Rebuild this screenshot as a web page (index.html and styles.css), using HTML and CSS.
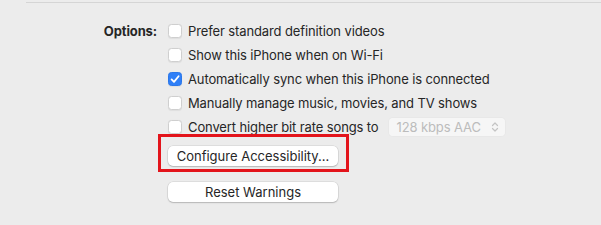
FILE: index.html
```html
<!DOCTYPE html>
<html>
<head>
<meta charset="utf-8">
<link rel="stylesheet" href="styles.css">
</head>
<body>
<div class="topline"></div>
<div class="options">
  <div class="label">Options:</div>
  <div class="controls">
    <div class="row"><span class="cb"></span><span>Prefer standard definition videos</span></div>
    <div class="row"><span class="cb"></span><span>Show this iPhone when on Wi-Fi</span></div>
    <div class="row"><span class="cb checked"><svg viewBox="0 0 14 14" width="14" height="14"><path d="M3.6 7.4 L6 9.9 L10.6 4.2" fill="none" stroke="#fff" stroke-width="1.8" stroke-linecap="round" stroke-linejoin="round"/></svg></span><span>Automatically sync when this iPhone is connected</span></div>
    <div class="row"><span class="cb"></span><span>Manually manage music, movies, and TV shows</span></div>
    <div class="row"><span class="cb"></span><span>Convert higher bit rate songs to</span>
      <span class="popup"><span>128 kbps AAC</span><svg viewBox="0 0 8 12" width="8" height="12"><path d="M1.5 4.5 L4 2 L6.5 4.5 M1.5 7.5 L4 10 L6.5 7.5" fill="none" stroke="#c4c4c4" stroke-width="1.2" stroke-linecap="round" stroke-linejoin="round"/></svg></span>
    </div>
    <div class="btnwrap highlight"><button class="btn">Configure Accessibility...</button></div>
    <div class="btnwrap second"><button class="btn">Reset Warnings</button></div>
  </div>
</div>
</body>
</html>
```
FILE: styles.css
```css
html, body {
  margin: 0;
  padding: 0;
  background: #ececec;
  width: 601px;
  height: 225px;
  overflow: hidden;
  font-family: "Inter", "Liberation Sans", sans-serif;
  font-size: 13px;
  letter-spacing: -0.12px;
  color: #262626;
}
.topline {
  margin: 2px 0 0 26px;
  height: 1px;
  background: #d5d5d5;
}
.options {
  display: grid;
  grid-template-columns: 157px auto;
  column-gap: 11px;
  padding-top: 16px;
}
.label {
  text-align: right;
  font-weight: 700;
  line-height: 24px;
}
.controls {
  display: flex;
  flex-direction: column;
}
.row {
  height: 24px;
  display: flex;
  align-items: center;
  gap: 6px;
  white-space: nowrap;
}
.cb {
  width: 14px;
  height: 14px;
  box-sizing: border-box;
  border-radius: 3.5px;
  background: #fff;
  border: 1px solid #cfcfcf;
  box-shadow: 0 0.5px 1px rgba(0,0,0,0.06);
  flex: none;
  display: flex;
}
.cb.checked {
  background: #2f7ff7;
  border-color: #2a77ea;
}
.cb.checked svg { margin: -1px; }
.popup {
  margin-left: 3px;
  width: 118px;
  height: 20px;
  box-sizing: border-box;
  border-radius: 5px;
  background: rgba(255,255,255,0.55);
  border: 0.5px solid rgba(0,0,0,0.06);
  display: flex;
  align-items: center;
  justify-content: space-between;
  padding: 0 6px 0 8px;
  color: #bcbcbc;
}
.btnwrap {
  position: relative;
  width: 170px;
}
.btnwrap.highlight { margin-top: 7px; }
.btnwrap.second { margin-top: 16px; }
.highlight::after {
  content: "";
  position: absolute;
  left: -10px;
  top: -12px;
  right: -11px;
  bottom: -6px;
  border: 3px solid #e3141b;
  pointer-events: none;
}
.btn {
  display: block;
  width: 170px;
  height: 20px;
  padding: 0;
  border: none;
  border-radius: 5px;
  background: #fff;
  box-shadow: 0 0 0 0.5px rgba(0,0,0,0.12), 0 1px 1.5px rgba(0,0,0,0.18);
  font: inherit;
  color: #262626;
  text-align: center;
}
```
